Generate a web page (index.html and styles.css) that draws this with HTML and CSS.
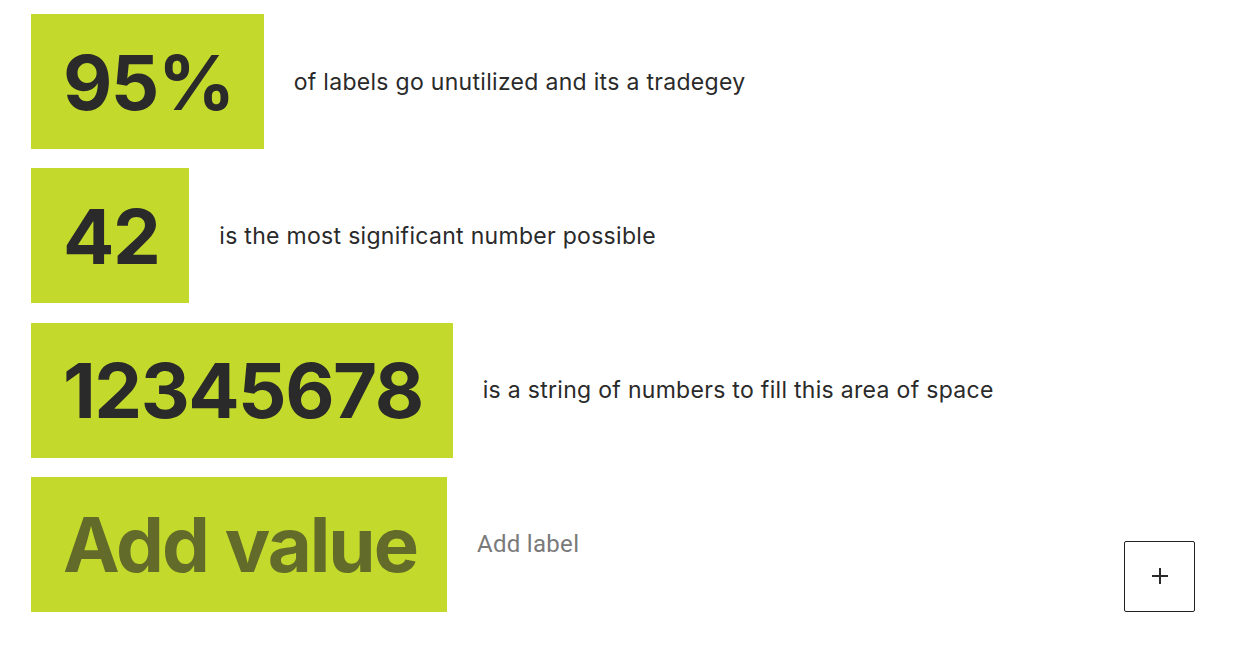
FILE: index.html
```html
<!DOCTYPE html>
<html>
<head>
<meta charset="utf-8">
<link rel="stylesheet" href="styles.css">
</head>
<body>
<div class="list">
  <div class="row">
    <div class="value">95%</div>
    <div class="label">of labels go unutilized and its a tradegey</div>
  </div>
  <div class="row">
    <div class="value">42</div>
    <div class="label">is the most significant number possible</div>
  </div>
  <div class="row">
    <div class="value">12345678</div>
    <div class="label">is a string of numbers to fill this area of space</div>
  </div>
  <div class="row">
    <div class="value placeholder">Add value</div>
    <div class="label placeholder-label">Add label</div>
    <button class="add-btn" aria-label="Add">
      <svg width="20" height="20" viewBox="0 0 20 20"><path d="M10 2v16M2 10h16" stroke="#2a2a2a" stroke-width="2" fill="none"/></svg>
    </button>
  </div>
</div>
</body>
</html>
```
FILE: styles.css
```css
* { box-sizing: border-box; }
html, body { margin: 0; padding: 0; background: #fff; }
body { font-family: Inter, "Liberation Sans", sans-serif; color: #2a2a2a; }
.list {
  display: flex;
  flex-direction: column;
  gap: 19.33px;
  padding: 14px 39px 0 31px;
}
.row {
  display: flex;
  align-items: center;
  gap: 30px;
  height: 135px;
}
.value {
  background: #c3d92b;
  height: 135px;
  display: flex;
  align-items: center;
  padding: 0 30px 0 32px;
  font-size: 76px;
  font-weight: 700;
  letter-spacing: -1.5px;
  line-height: 1;
}
.value.placeholder {
  color: #626b2a;
  letter-spacing: -2px;
  word-spacing: 1px;
}
.label {
  font-size: 23px;
  font-weight: 400;
  letter-spacing: 0.3px;
  color: #2a2a2a;
}
.placeholder-label {
  font-family: Roboto, "Liberation Sans", sans-serif;
  font-size: 24px;
  letter-spacing: 0.3px;
  color: #7a7a7a;
}
.add-btn {
  margin-left: auto;
  align-self: flex-end;
  width: 71px;
  height: 71px;
  border: 1.5px solid #222;
  border-radius: 2px;
  background: #fff;
  display: flex;
  align-items: center;
  justify-content: center;
  padding: 0;
}
```
